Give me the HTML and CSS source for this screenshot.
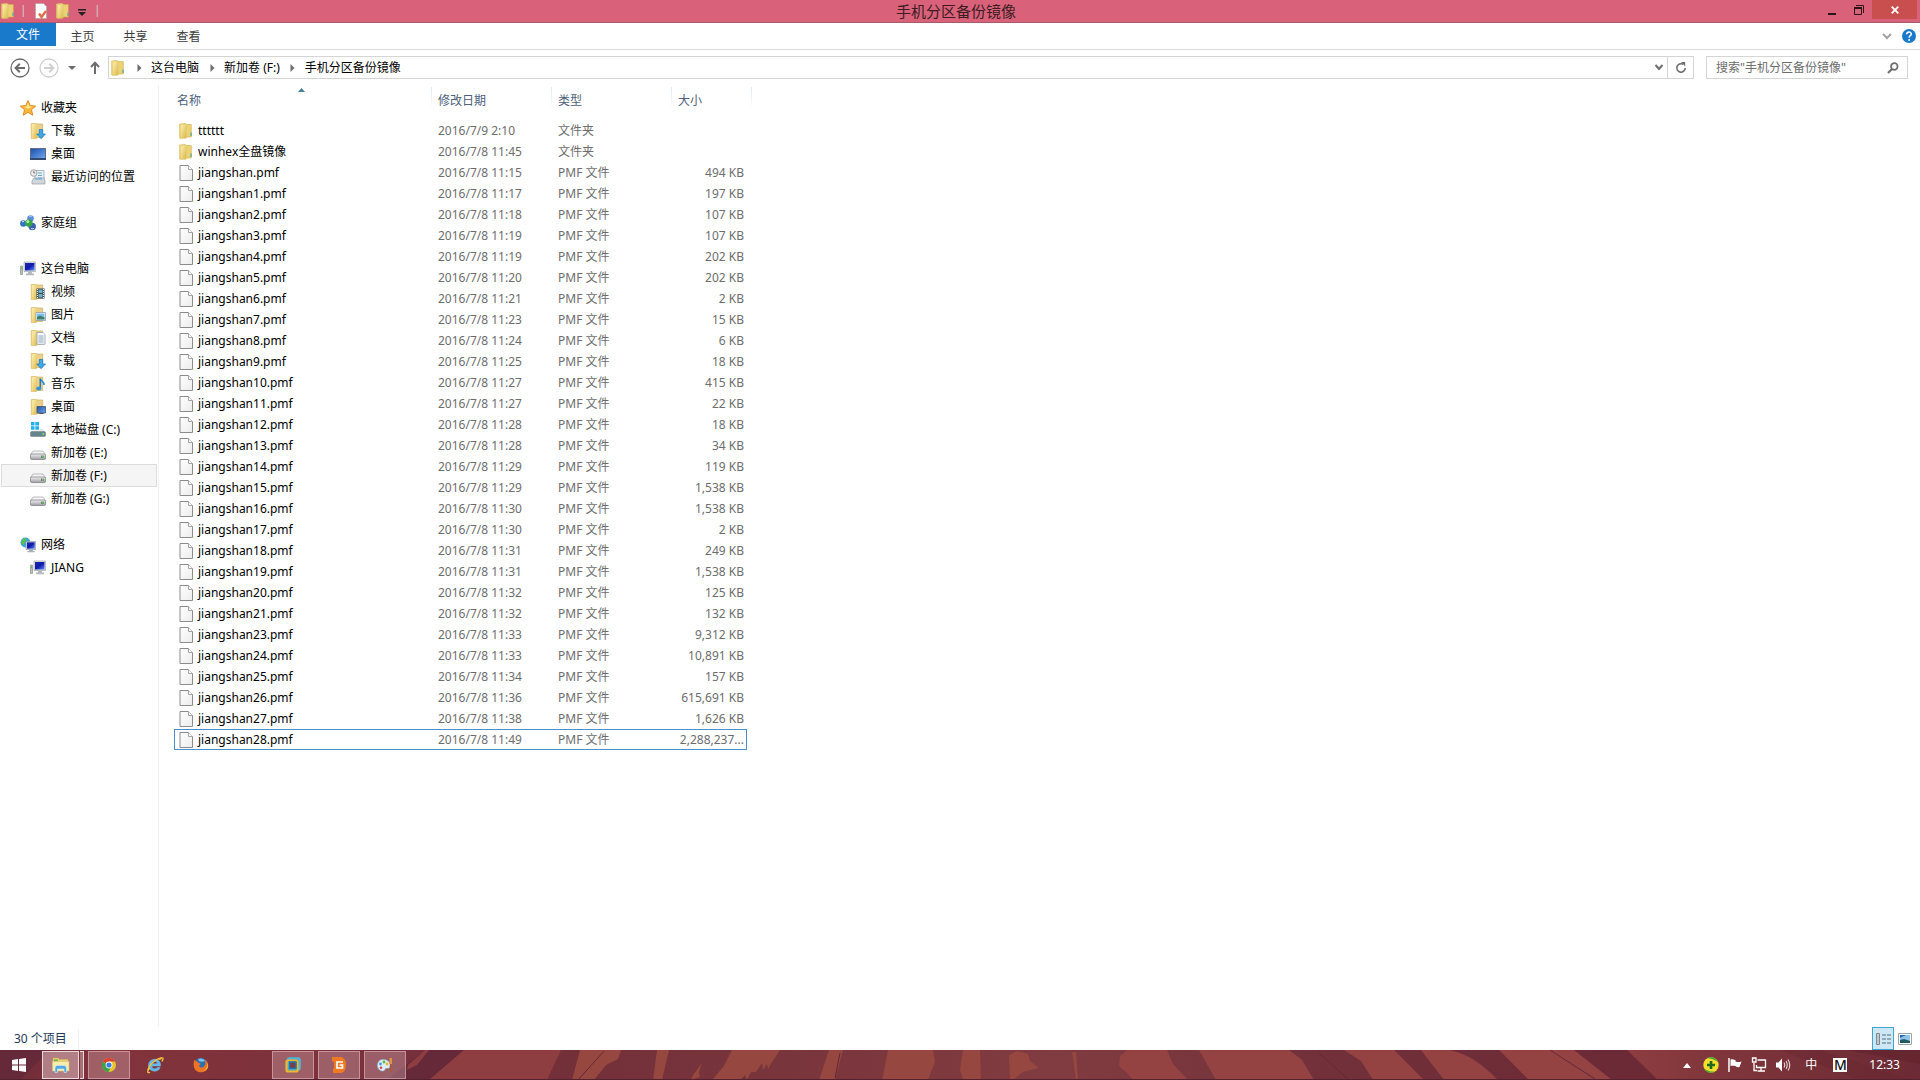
FILE: index.html
```html
<!DOCTYPE html>
<html lang="zh-CN">
<head>
<meta charset="utf-8">
<title>手机分区备份镜像</title>
<meta name="viewport" content="width=device-width, initial-scale=1">
<link rel="stylesheet" href="styles.css">
</head>
<body>
<svg class="defs" aria-hidden="true">
  <defs>
    <linearGradient id="gold" x1="0" y1="0" x2="1" y2="1"><stop offset="0" stop-color="#fdf3b4"/><stop offset="1" stop-color="#dcb84c"/></linearGradient>
    <linearGradient id="page" x1="0" y1="0" x2="1" y2="1"><stop offset="0" stop-color="#ffffff"/><stop offset="1" stop-color="#ececec"/></linearGradient>
    <linearGradient id="screen" x1="0" y1="0" x2="1" y2="1"><stop offset="0" stop-color="#1a2c9c"/><stop offset=".5" stop-color="#1018b0"/><stop offset="1" stop-color="#5c8cf0"/></linearGradient>
    <linearGradient id="desk" x1="0" y1="0" x2="1" y2="1"><stop offset="0" stop-color="#1b4fa8"/><stop offset="1" stop-color="#6fa8f0"/></linearGradient>
    <linearGradient id="metal" x1="0" y1="0" x2="0" y2="1"><stop offset="0" stop-color="#f2f2f4"/><stop offset="1" stop-color="#9c9ca4"/></linearGradient>
    <symbol id="folder" viewBox="0 0 16 16"><path d="M1.500 1l5.500-.7V14l-5.500 1z" fill="#f5e08a" stroke="#d9bd60" stroke-width=".6"/><path d="M7 1.500h6.300V14H6z" fill="#ecd274" stroke="#cfae4c" stroke-width=".6"/><path d="M2.500 2l5.600-1.200v14.400L2.500 15.500z" fill="url(#gold)" stroke="#dcc062" stroke-width=".5"/><path d="M12.400 9.500h1.300V13h-1.300z" fill="#5aa7a0"/></symbol>
    <symbol id="lib" viewBox="0 0 16 16"><path d="M1.200.5h5.300v15H1.200z" fill="#f3dd92" stroke="#cfae5a" stroke-width=".6"/><path d="M6.500 1h6.200v13.500H6z" fill="#ead08a" stroke="#c9a858" stroke-width=".6"/><path d="M2.200 1.500L7 .6v14.400l-4.800.7z" fill="url(#gold)"/></symbol>
    <symbol id="file" viewBox="0 0 16 16"><path d="M2 .5h8.500L14.500 4.500v11H2z" fill="url(#page)" stroke="#8c8c8c"/><path d="M10.500.5v4h4" fill="#fff" stroke="#a4a4a4"/></symbol>
    <symbol id="star" viewBox="0 0 16 16"><path d="M8 .5l2.200 5 5.500.6-4.200 3.600 1.300 5.600L8 12.400 3.200 15.300l1.300-5.600L.3 6.100l5.500-.6z" fill="#f9b93c" stroke="#dd8320" stroke-width=".9"/><path d="M8 3l1.500 3.400 3 .4L8 8.500 4 6.800l2.700-.4z" fill="#ffe89a"/></symbol>
    <symbol id="down" viewBox="0 0 16 16"><use href="#lib"/><path d="M9.300 6.500h3.400V11H15.500L11 15.700 6.700 11h2.600z" fill="#3fa9e8" stroke="#1b76b8" stroke-width=".7"/></symbol>
    <symbol id="desktop" viewBox="0 0 16 16"><path d="M.5 2.500h15v10H.5z" fill="url(#desk)" stroke="#5c6c88"/><path d="M0 12h16v2H0z" fill="#33496e"/></symbol>
    <symbol id="recent" viewBox="0 0 16 16"><path d="M5 1.500h9v10H5z" fill="#eaf4fb" stroke="#98a6b2" stroke-width=".8"/><path d="M8 4h4M8 6.500h4M8 9h4" stroke="#69a5d0"/><path d="M2 12l2-3h10l1 3v3H2z" fill="#d2d6da" stroke="#9a9fa5" stroke-width=".7"/><path d="M5 10h7" stroke="#57a4d5"/><circle cx="3.800" cy="4" r="3.300" fill="#eee" stroke="#999" stroke-width=".9"/><path d="M3.800 2v2h1.500" fill="none" stroke="#555" stroke-width=".8"/></symbol>
    <symbol id="home" viewBox="0 0 16 16"><circle cx="10.500" cy="3.500" r="3.300" fill="#5b8de0"/><circle cx="3.300" cy="8.500" r="3.200" fill="#3273c8"/><circle cx="12.200" cy="11.500" r="3.700" fill="#3a5fb4"/><circle cx="8.800" cy="8" r="3.800" fill="#38a544"/><circle cx="7.800" cy="6.600" r="1.600" fill="#b8e8a8"/><path d="M9.500 1.500a2 2 0 0 1 2 0M2 7a2 2 0 0 1 2-.5M11 13.500a3 3 0 0 0 3 0" stroke="#d8e8ff" fill="none"/></symbol>
    <symbol id="pc" viewBox="0 0 16 16"><path d="M.5 5h2v8.500h-2z" fill="#b8c0b8" stroke="#8a948a" stroke-width=".7"/><path d="M1 6.500h1v1.500H1z" fill="#45c445"/><path d="M4 1h11.500v9.500H4z" fill="#dfe2e6" stroke="#a3a8ae" stroke-width=".7"/><path d="M5 2h9.500v7.500H5z" fill="url(#screen)"/><path d="M8 10.500h4v2h2v1.800H6v-1.800h2z" fill="#b5b9be"/></symbol>
    <symbol id="video" viewBox="0 0 16 16"><use href="#lib"/><path d="M6.500 4.500h8v10h-8z" fill="#39444c"/><path d="M8.500 5.500h4V9h-4zm0 4.500h4v3.500h-4z" fill="#6fb0c4"/><path d="M7.500 5v9.500M13.500 5v9.500" stroke="#eee" stroke-dasharray="1 1"/></symbol>
    <symbol id="picture" viewBox="0 0 16 16"><use href="#lib"/><path d="M6 5.500h9.500v8H6z" fill="#fff" stroke="#8c9aa8" stroke-width=".8"/><path d="M7 6.500h7.500v6H7z" fill="#79bfe8"/><path d="M7 12.500V10l3-1.500 4.500 2v2z" fill="#3c8067"/></symbol>
    <symbol id="docs" viewBox="0 0 16 16"><use href="#lib"/><path d="M7 2.500h6l2 2v9.800H7z" fill="#f8fafc" stroke="#96a0aa" stroke-width=".8"/><path d="M8.500 6h5M8.500 8h5M8.500 10h5M8.500 12h5" stroke="#7c9cc0" stroke-width=".9"/></symbol>
    <symbol id="music" viewBox="0 0 16 16"><use href="#lib"/><path d="M10 2.500c1 2.500 4.500 3 4 6.500" fill="none" stroke="#2c8fd0" stroke-width="1.600"/><path d="M10.300 3v9" stroke="#2378b8" stroke-width="1.500"/><ellipse cx="8.800" cy="12.500" rx="2.500" ry="1.900" fill="#2f96da"/></symbol>
    <symbol id="deskfolder" viewBox="0 0 16 16"><use href="#lib"/><path d="M7 7.500h8.500V14H7z" fill="url(#desk)" stroke="#43546c" stroke-width=".8"/><path d="M9.500 14.500h4" stroke="#555"/></symbol>
    <symbol id="drive" viewBox="0 0 16 16"><path d="M3 6h10l2.700 4H.3z" fill="#f5f5f6" stroke="#a4a4aa" stroke-width=".7"/><rect x=".4" y="9" width="15.200" height="5.500" rx="1.500" fill="url(#metal)" stroke="#85858c" stroke-width=".8"/><path d="M11 10.500h1.500v2.500H11z" fill="#777"/><path d="M13 10.500h1.200v2.500H13z" fill="#45c030"/></symbol>
    <symbol id="windrive" viewBox="0 0 16 16"><path d="M1 0h3.500v3.500H1zM5.300 0H9v3.500H5.300zM1 4.300h3.500v3.500H1zM5.300 4.300H9v3.500H5.300z" fill="#22b1ee"/><path d="M10 7h3l2.500 3H1l1.500-1.500H10z" fill="#e2e8ea"/><rect x=".4" y="9.500" width="15.200" height="5" rx="1.500" fill="#62868c" stroke="#8a9296" stroke-width=".8"/><path d="M12.500 11h1.500v2h-1.500z" fill="#6ee050"/></symbol>
    <symbol id="net" viewBox="0 0 16 16"><circle cx="5.500" cy="5.500" r="5" fill="#38a6d8"/><path d="M2 3c2-2 4-2 5-1L5 5 3 8 1 6zM7 5l3-1v4L7 9z" fill="#5cc050"/><path d="M6 4.500h9.500v8H6z" fill="#dfe2e6" stroke="#8f98a4" stroke-width=".7"/><path d="M7 5.300h7.700v6.400H7z" fill="url(#screen)"/><path d="M9 12.500h4V14h1.500v1.300h-7V14H9z" fill="#a8b0ba"/></symbol>
    <symbol id="sep" viewBox="0 0 6 8"><path d="M1.500 0l4 4-4 4z" fill="#6d6d6d"/></symbol>
  </defs>
</svg>

<header class="titlebar">
  <div class="quick">
    <svg class="q-folder" viewBox="0 0 16 16"><use href="#folder"/></svg>
    <span class="bar"></span>
    <button class="q-btn" aria-label="属性"><svg width="16" height="16" viewBox="0 0 16 16"><path d="M2.500.5h8l3 3v12h-11z" fill="#fff" stroke="#b9a6ac" stroke-width=".8"/><path d="M6 10.500l2.500 3.500L13 8" fill="none" stroke="#e0704a" stroke-width="2.500"/></svg></button>
    <button class="q-btn" aria-label="新建文件夹"><svg width="16" height="16"><use href="#folder"/></svg></button>
    <button class="q-caret" aria-label="自定义"><svg width="8" height="7" viewBox="0 0 8 7"><path d="M0 0h8v1.500H0zM0 3h8L4 7z" fill="#222"/></svg></button>
    <span class="bar"></span>
  </div>
  <h1 class="title">手机分区备份镜像</h1>
  <div class="winbtns">
    <button class="w-btn" aria-label="最小化"><svg width="10" height="12" viewBox="0 0 10 12"><path d="M1 9h8v2H1z" fill="#2b1519"/></svg></button>
    <button class="w-btn" aria-label="还原"><svg width="10" height="10" viewBox="0 0 10 10"><path d="M2 .5h7.500V8M.5 3v6.500h7V3M0 3h8" fill="none" stroke="#2b1519"/><path d="M0 2h8v2H0z" fill="#2b1519"/></svg></button>
    <button class="w-btn w-close" aria-label="关闭"><svg width="8" height="8" viewBox="0 0 8 8"><path d="M.7.7l6.600 6.600M7.300.7L.7 7.300" stroke="#fff" stroke-width="1.800"/></svg></button>
  </div>
</header>

<nav class="ribbon" aria-label="功能区">
  <button class="tab tab-file">文件</button>
  <button class="tab">主页</button>
  <button class="tab">共享</button>
  <button class="tab">查看</button>
  <button class="r-icon push" aria-label="展开功能区"><svg width="10" height="7" viewBox="0 0 10 7"><path d="M1 1l4 4 4-4" fill="none" stroke="#a2a2a2" stroke-width="2"/></svg></button>
  <button class="r-icon" aria-label="帮助"><svg width="14" height="14" viewBox="0 0 14 14"><circle cx="7" cy="7" r="7" fill="#1979ca"/><path d="M4.700 5.300c0-3 4.600-3 4.600-.3 0 1.700-2.200 1.700-2.200 3.700" fill="none" stroke="#fff" stroke-width="1.500"/><circle cx="7.100" cy="10.900" r="1" fill="#fff"/></svg></button>
</nav>

<div class="addressbar">
  <button class="a-btn" aria-label="后退"><svg width="20" height="20" viewBox="0 0 20 20"><circle cx="10" cy="10" r="9" fill="none" stroke="#6a6a6a" stroke-width="1.300"/><path d="M15 10H6M9.800 5.800L5.600 10l4.200 4.200" fill="none" stroke="#6a6a6a" stroke-width="2"/></svg></button>
  <button class="a-btn" aria-label="前进"><svg width="20" height="20" viewBox="0 0 20 20"><circle cx="10" cy="10" r="9" fill="none" stroke="#cfcfcf" stroke-width="1.300"/><path d="M5 10h9M10.200 5.800l4.200 4.200-4.200 4.200" fill="none" stroke="#cfcfcf" stroke-width="2"/></svg></button>
  <button class="a-caret" aria-label="最近浏览的位置"><svg width="8" height="4" viewBox="0 0 8 4"><path d="M0 0h8L4 4z" fill="#6d6d6d"/></svg></button>
  <button class="a-up" aria-label="上移"><svg width="10" height="13" viewBox="0 0 10 13"><path d="M5 13V2M1 6l4-4.300L9 6" fill="none" stroke="#6d6d6d" stroke-width="2"/></svg></button>
  <div class="crumbs">
    <svg class="c-folder" viewBox="0 0 16 16"><use href="#folder"/></svg>
    <span class="c-sep"><svg width="6" height="8"><use href="#sep"/></svg></span><a href="#pc-root">这台电脑</a>
    <span class="c-sep"><svg width="6" height="8"><use href="#sep"/></svg></span><a href="#vol-f">新加卷 (F:)</a>
    <span class="c-sep"><svg width="6" height="8"><use href="#sep"/></svg></span><a href="#files">手机分区备份镜像</a>
    <button class="c-drop" aria-label="以前的位置"><svg width="8" height="7" viewBox="0 0 8 7"><path d="M.5 1L4 5l3.500-4" fill="none" stroke="#6d6d6d" stroke-width="2"/></svg></button>
    <button class="c-refresh" aria-label="刷新"><svg width="12" height="12" viewBox="0 0 12 12"><path d="M8 2.300A4.200 4.200 0 1 0 10.200 6" fill="none" stroke="#6d6d6d" stroke-width="1.600"/><path d="M6 0h4.200v4.500z" fill="#6d6d6d"/></svg></button>
  </div>
  <div class="search">
    <input type="search" aria-label="搜索" placeholder='搜索"手机分区备份镜像"'>
    <svg width="12" height="12" viewBox="0 0 12 12"><circle cx="7.300" cy="4.500" r="3.300" fill="none" stroke="#6d6d6d" stroke-width="1.700"/><path d="M5 7L1 11" stroke="#6d6d6d" stroke-width="2.200"/></svg>
  </div>
</div>

<main class="main">
  <nav class="tree" aria-label="导航窗格">
    <ul class="group">
      <li><a class="root" href="#fav"><svg><use href="#star"/></svg>收藏夹</a></li>
      <li><a href="#fav-down"><svg><use href="#down"/></svg>下载</a></li>
      <li><a href="#fav-desk"><svg><use href="#desktop"/></svg>桌面</a></li>
      <li><a href="#fav-recent"><svg><use href="#recent"/></svg>最近访问的位置</a></li>
    </ul>
    <ul class="group">
      <li><a class="root" href="#home-group"><svg><use href="#home"/></svg>家庭组</a></li>
    </ul>
    <ul class="group">
      <li><a class="root" href="#pc-root"><svg><use href="#pc"/></svg>这台电脑</a></li>
      <li><a href="#pc-video"><svg><use href="#video"/></svg>视频</a></li>
      <li><a href="#pc-pic"><svg><use href="#picture"/></svg>图片</a></li>
      <li><a href="#pc-docs"><svg><use href="#docs"/></svg>文档</a></li>
      <li><a href="#pc-down"><svg><use href="#down"/></svg>下载</a></li>
      <li><a href="#pc-music"><svg><use href="#music"/></svg>音乐</a></li>
      <li><a href="#pc-desk"><svg><use href="#deskfolder"/></svg>桌面</a></li>
      <li><a href="#vol-c"><svg><use href="#windrive"/></svg>本地磁盘 (C:)</a></li>
      <li><a href="#vol-e"><svg><use href="#drive"/></svg>新加卷 (E:)</a></li>
      <li><a class="current" href="#vol-f"><svg><use href="#drive"/></svg>新加卷 (F:)</a></li>
      <li><a href="#vol-g"><svg><use href="#drive"/></svg>新加卷 (G:)</a></li>
    </ul>
    <ul class="group">
      <li><a class="root" href="#network"><svg><use href="#net"/></svg>网络</a></li>
      <li><a href="#jiang"><svg><use href="#pc"/></svg>JIANG</a></li>
    </ul>
  </nav>

  <section class="content" id="files">
    <table class="files">
      <colgroup><col class="col-name"><col class="col-mid"><col class="col-mid"><col class="col-size"><col class="col-end"></colgroup>
      <thead>
        <tr><th scope="col" class="sorted" aria-sort="ascending">名称<svg class="sort" width="7" height="4" viewBox="0 0 7 4"><path d="M0 4l3.500-4L7 4z" fill="#4a8098"/></svg></th><th scope="col">修改日期</th><th scope="col">类型</th><th scope="col">大小</th><td class="end"></td></tr>
      </thead>
      <tbody>
        <tr><td><svg><use href="#folder"/></svg>tttttt</td><td>2016/7/9 2:10</td><td>文件夹</td><td></td></tr>
        <tr><td><svg><use href="#folder"/></svg>winhex全盘镜像</td><td>2016/7/8 11:45</td><td>文件夹</td><td></td></tr>
        <tr><td><svg><use href="#file"/></svg>jiangshan.pmf</td><td>2016/7/8 11:15</td><td>PMF 文件</td><td>494 KB</td></tr>
        <tr><td><svg><use href="#file"/></svg>jiangshan1.pmf</td><td>2016/7/8 11:17</td><td>PMF 文件</td><td>197 KB</td></tr>
        <tr><td><svg><use href="#file"/></svg>jiangshan2.pmf</td><td>2016/7/8 11:18</td><td>PMF 文件</td><td>107 KB</td></tr>
        <tr><td><svg><use href="#file"/></svg>jiangshan3.pmf</td><td>2016/7/8 11:19</td><td>PMF 文件</td><td>107 KB</td></tr>
        <tr><td><svg><use href="#file"/></svg>jiangshan4.pmf</td><td>2016/7/8 11:19</td><td>PMF 文件</td><td>202 KB</td></tr>
        <tr><td><svg><use href="#file"/></svg>jiangshan5.pmf</td><td>2016/7/8 11:20</td><td>PMF 文件</td><td>202 KB</td></tr>
        <tr><td><svg><use href="#file"/></svg>jiangshan6.pmf</td><td>2016/7/8 11:21</td><td>PMF 文件</td><td>2 KB</td></tr>
        <tr><td><svg><use href="#file"/></svg>jiangshan7.pmf</td><td>2016/7/8 11:23</td><td>PMF 文件</td><td>15 KB</td></tr>
        <tr><td><svg><use href="#file"/></svg>jiangshan8.pmf</td><td>2016/7/8 11:24</td><td>PMF 文件</td><td>6 KB</td></tr>
        <tr><td><svg><use href="#file"/></svg>jiangshan9.pmf</td><td>2016/7/8 11:25</td><td>PMF 文件</td><td>18 KB</td></tr>
        <tr><td><svg><use href="#file"/></svg>jiangshan10.pmf</td><td>2016/7/8 11:27</td><td>PMF 文件</td><td>415 KB</td></tr>
        <tr><td><svg><use href="#file"/></svg>jiangshan11.pmf</td><td>2016/7/8 11:27</td><td>PMF 文件</td><td>22 KB</td></tr>
        <tr><td><svg><use href="#file"/></svg>jiangshan12.pmf</td><td>2016/7/8 11:28</td><td>PMF 文件</td><td>18 KB</td></tr>
        <tr><td><svg><use href="#file"/></svg>jiangshan13.pmf</td><td>2016/7/8 11:28</td><td>PMF 文件</td><td>34 KB</td></tr>
        <tr><td><svg><use href="#file"/></svg>jiangshan14.pmf</td><td>2016/7/8 11:29</td><td>PMF 文件</td><td>119 KB</td></tr>
        <tr><td><svg><use href="#file"/></svg>jiangshan15.pmf</td><td>2016/7/8 11:29</td><td>PMF 文件</td><td>1,538 KB</td></tr>
        <tr><td><svg><use href="#file"/></svg>jiangshan16.pmf</td><td>2016/7/8 11:30</td><td>PMF 文件</td><td>1,538 KB</td></tr>
        <tr><td><svg><use href="#file"/></svg>jiangshan17.pmf</td><td>2016/7/8 11:30</td><td>PMF 文件</td><td>2 KB</td></tr>
        <tr><td><svg><use href="#file"/></svg>jiangshan18.pmf</td><td>2016/7/8 11:31</td><td>PMF 文件</td><td>249 KB</td></tr>
        <tr><td><svg><use href="#file"/></svg>jiangshan19.pmf</td><td>2016/7/8 11:31</td><td>PMF 文件</td><td>1,538 KB</td></tr>
        <tr><td><svg><use href="#file"/></svg>jiangshan20.pmf</td><td>2016/7/8 11:32</td><td>PMF 文件</td><td>125 KB</td></tr>
        <tr><td><svg><use href="#file"/></svg>jiangshan21.pmf</td><td>2016/7/8 11:32</td><td>PMF 文件</td><td>132 KB</td></tr>
        <tr><td><svg><use href="#file"/></svg>jiangshan23.pmf</td><td>2016/7/8 11:33</td><td>PMF 文件</td><td>9,312 KB</td></tr>
        <tr><td><svg><use href="#file"/></svg>jiangshan24.pmf</td><td>2016/7/8 11:33</td><td>PMF 文件</td><td>10,891 KB</td></tr>
        <tr><td><svg><use href="#file"/></svg>jiangshan25.pmf</td><td>2016/7/8 11:34</td><td>PMF 文件</td><td>157 KB</td></tr>
        <tr><td><svg><use href="#file"/></svg>jiangshan26.pmf</td><td>2016/7/8 11:36</td><td>PMF 文件</td><td>615,691 KB</td></tr>
        <tr><td><svg><use href="#file"/></svg>jiangshan27.pmf</td><td>2016/7/8 11:38</td><td>PMF 文件</td><td>1,626 KB</td></tr>
        <tr class="focused"><td><svg><use href="#file"/></svg>jiangshan28.pmf</td><td>2016/7/8 11:49</td><td>PMF 文件</td><td>2,288,237...</td></tr>
      </tbody>
    </table>
  </section>
</main>

<div class="statusbar">
  <span class="count">30 个项目</span>
  <button class="view view-on" aria-label="详细信息"><svg width="16" height="14" viewBox="0 0 16 14"><path d="M1.500 1.500h3v11h-3zM1 5h4M1 9h4" fill="#fff" stroke="#7a8894"/><path d="M2.500 3h1M2.500 7h1M2.500 11h1" stroke="#333"/><path d="M7 3h4M12 3h4M7 7h4M12 7h4M7 11h4M12 11h4" stroke="#5a6a76"/></svg></button>
  <button class="view" aria-label="大图标"><svg width="14" height="12" viewBox="0 0 14 12"><path d="M.5.5h13v11H.5z" fill="#fff" stroke="#9ba3ab"/><path d="M2 2h10v8H2z" fill="#8fc3ea"/><path d="M2 10V7l4-1 6 2v2z" fill="#1f5b60"/><path d="M2 2h6l-6 3z" fill="#2b66b0"/></svg></button>
</div>

<footer class="taskbar">
  <svg class="wallpaper" viewBox="0 0 1920 30" preserveAspectRatio="none" aria-hidden="true">
    <defs>
      <linearGradient id="base" x1="0" x2="1"><stop offset="0" stop-color="#6e2c38"/><stop offset=".06" stop-color="#82333b"/><stop offset=".16" stop-color="#7d323b"/><stop offset=".2" stop-color="#77303c"/><stop offset=".3" stop-color="#743039"/><stop offset=".55" stop-color="#803c40"/><stop offset=".7" stop-color="#71303a"/><stop offset=".84" stop-color="#6c2a36"/><stop offset="1" stop-color="#66262f"/></linearGradient>
      <linearGradient id="fade" x1="0" x2="1"><stop offset="0" stop-color="#8e3d40"/><stop offset=".3" stop-color="#80363b"/><stop offset="1" stop-color="#6b2a35"/></linearGradient>
    </defs>
    <path fill="url(#base)" d="M0 0h1920v30H0z"/>
    <path fill="#65293a" d="M0 0h50L20 30H0zM425 0h39L429 30h-42z"/>
    <path fill="#8e3e41" d="M408 15L425 0h4l-12 15-10 5zM464 0h97l-14 30H429z"/>
    <path fill="#96473f" d="M580 0h41l-3 9-12 6-12 15h-22zM657 0h12l-7 30h-9zM732 0h48l-8 12-4 7-1-5-4 6-1-7-6 9-5 0-4 8-2-5-5 5h-28l12-14zM702 13l-3 9 1 5-9 3 2-5zM829 0h14l-8 30h-16zM888 0h45l2 12-7 18h-46l3-14zM963 0h17l1 30h-18l-3-10zM1009 5l8-4 11 3 2 7 9 7-16 4-10 8h-3zM1072 2h4l2 28h-2z"/>
    <path fill="#954342" d="M1127 0h40l6 14 15 16h-55l-6-7-8-7 1-10zM1199 0h90l13 10 12 20h-98zM1344 0h50l30 30h-51l-12-19zM1421 0h28c20 4 33 14 49 30h-54zM1499 0h75l38 30h-83z"/>
    <path fill="none" stroke="#652936" d="M1550 0l45 29M604 1l-26 29M840 3l-5 25M1319 3l30 27"/>
    <path fill="url(#fade)" d="M1627 0h220l73 14v16h-262z"/>
    <path fill="#63262f" opacity=".3" d="M1780 0h40l90 30h-50z"/>
    <path fill="#54222e" d="M0 29h1920v1H0z"/>
  </svg>
  <button class="task task-start" aria-label="开始"><svg width="14" height="14" viewBox="0 0 14 14"><path d="M0 2l6-1v5.500H0zM7 .9L14 0v6.500H7zM0 7.500h6V13l-6-1zM7 7.500h7V14l-7-1z" fill="#fff"/></svg></button>
  <span class="stack">
    <button class="task open active" aria-label="文件资源管理器"><svg width="18" height="16" viewBox="0 0 18 16"><path d="M1 1h5l1.500 1.500H16v8H1z" fill="#e9d27a" stroke="#cfae55" stroke-width=".6"/><path d="M2 2.500h4V4H2z" fill="#68b04a"/><path d="M.5 4.500h16.500V14H.5z" fill="#f7ecac" stroke="#d9c06a" stroke-width=".6"/><path d="M3 15.500V11q0-2.500 2.500-2.500h6.500Q14.500 8.500 14.500 11v4.500H12V12H5.500v3.500z" fill="#4fa9e0" stroke="#d4ecfa" stroke-width=".6"/></svg></button>
    <span class="stack-edge"></span>
  </span>
  <button class="task open" aria-label="Chrome"><svg width="16" height="16" viewBox="0 0 16 16"><circle cx="8" cy="8" r="7" fill="#e8c52c"/><path d="M8 8L1.900 4.500A7 7 0 0 1 14.100 4.500H8z" fill="#d9402f"/><path d="M1.900 4.500A7 7 0 0 0 7.500 15L10 10z" fill="#3aa14a"/><circle cx="8" cy="8" r="3.400" fill="#fff"/><circle cx="8" cy="8" r="2.600" fill="#3e7de0"/></svg></button>
  <button class="task" aria-label="Internet Explorer"><svg width="18" height="18" viewBox="0 0 18 18"><path d="M14.500 10H5.700c.2 3.300 4.300 3.600 5.500 1.400h3C12.500 17 2.500 16.500 2.500 9.300c0-8 13-8.200 12 .7zM5.800 7.700h5.600c-.3-3-5-3-5.600 0z" fill="#5cb8ee" stroke="#8bd0fa" stroke-width=".4"/><path d="M3.800 12C1 15 1 17.500 4 16.300M13.500 3.500C17 .5 18 2 15.800 5.500M1.800 14C3 9 9 3 15.500 1.700" fill="none" stroke="#f0c13c" stroke-width="1.400"/></svg></button>
  <button class="task" aria-label="Firefox"><svg width="16" height="16" viewBox="0 0 16 16"><circle cx="8" cy="8" r="7" fill="#2b6fb5"/><path d="M5 2c3-1.500 6 0 7 2-2 1-4 1-6 0z" fill="#79c3ec"/><path d="M1.200 3C2.500 4 4 4 5 5.500L8 7 6 8.500c1 3 5 2.500 6-.5 1-2 0-4-1-5.500 3 1.500 4.800 4 4 7.500C13.500 17 2.500 17 1 10c-.5-2-.5-5 .2-7z" fill="#ee7424"/><path d="M14.300 5c1 3-.5 8.500-5.300 9 5 .5 7.500-4.500 5.300-9z" fill="#f9c440"/></svg></button>
  <span class="task-space"></span>
  <button class="task open" aria-label="VMware"><svg width="16" height="16" viewBox="0 0 16 16"><rect x="3" y="1.500" width="11.500" height="11" rx="1.500" fill="none" stroke="#4ab8dc" stroke-width="2.600"/><rect x="1.500" y="3.500" width="11" height="11" rx="1.500" fill="none" stroke="#f2b52e" stroke-width="2.200"/><rect x="4.500" y="5" width="6.500" height="6.500" fill="#7b3d4a" stroke="#1d7ca8" stroke-width="1.500"/></svg></button>
  <button class="task open" aria-label="DiskGenius"><svg width="16" height="16" viewBox="0 0 16 16"><path d="M1 0h9q5 1 5 8t-5 8H2V12l1-1V5L1 4z" fill="#ef7a22"/><path d="M12 5H6v6h5.500V8H8.500" fill="none" stroke="#fff" stroke-width="1.700"/></svg></button>
  <button class="task open" aria-label="画图"><svg width="18" height="16" viewBox="0 0 18 16"><path d="M8 2.500C2 2 .5 7.500 2 11s6 4 7 1.500 3.500 0 4.500-2C15 7 13 2.800 8 2.500z" fill="#dfeef6" stroke="#8fb0c4" stroke-width=".6"/><circle cx="4.500" cy="7" r="1.400" fill="#3a9ae0"/><circle cx="8" cy="5" r="1.400" fill="#58b848"/><circle cx="11" cy="7" r="1.400" fill="#e8b62c"/><circle cx="5" cy="10.700" r="1.300" fill="#d0483c"/><path d="M13.500 1h2.500v6h-2.500z" fill="#e09340"/><path d="M14 7h1.500v8H14z" fill="#a85a2c"/></svg></button>
  <div class="tray">
    <button class="tr" aria-label="显示隐藏的图标"><svg width="8" height="5" viewBox="0 0 8 5"><path d="M0 5l4-5 4 5z" fill="#fff"/></svg></button>
    <button class="tr" aria-label="安全卫士"><svg width="16" height="16" viewBox="0 0 16 16"><circle cx="8" cy="8" r="7.700" fill="#f3df2c"/><path d="M4 1.300C8-1 13 1 15 5c-4-3-8-3.500-11-3.700zM1 11c3 3 7 4 11 3.500-4 2.500-9 1-11-3.500z" fill="#3fa535"/><path d="M8 4v8M4 8h8" stroke="#1c6b1c" stroke-width="2.600"/></svg></button>
    <button class="tr" aria-label="操作中心"><svg width="16" height="16" viewBox="0 0 16 16"><path d="M2 1v14" stroke="#fff" stroke-width="1.500"/><path d="M3.500 2.500c3-1 4 .5 5 .5v1.500c2 1 4 .5 6 0L12.500 10c-2 .5-3.500 0-4-1-2-.5-3-.5-5 0z" fill="#fff"/></svg></button>
    <button class="tr" aria-label="网络"><svg width="16" height="16" viewBox="0 0 16 16"><path d="M6.500 3H14.500v7.500h-9V8M10 10.500V14M6.500 14H14M3 6v7.500h3M1.500 1h3.500v4H1.500z" fill="none" stroke="#fff" stroke-width="1.300"/></svg></button>
    <button class="tr" aria-label="音量"><svg width="16" height="16" viewBox="0 0 16 16"><path d="M1 5.500h2.500L7 1.500v13L3.500 10.500H1z" fill="#fff"/><path d="M9 5.500q1.500 2.500 0 5M11 4q2.500 4 0 8M13 2.500q3.500 5.500 0 11" fill="none" stroke="#e6d4d6" stroke-width="1.100"/></svg></button>
    <button class="tr tr-lang">中</button>
    <button class="tr tr-ime" aria-label="输入法"><span class="ime">M</span></button>
    <time class="clock">12:33</time>
  </div>
</footer>
</body>
</html>
```
FILE: styles.css
```css
* { box-sizing: border-box; }

body {
  margin: 0;
  min-height: 100vh;
  display: flex;
  flex-direction: column;
  background: #fff;
  color: #000;
  font: 12px/20px "Noto Sans", "Noto Sans CJK SC", sans-serif;
}

button {
  display: flex;
  align-items: center;
  justify-content: center;
  padding: 0;
  border: 0;
  background: none;
  color: inherit;
  font: inherit;
}

a { color: inherit; text-decoration: none; }
svg { flex: none; }
.defs { position: absolute; width: 0; height: 0; }

/* Title bar */
.titlebar {
  display: grid;
  grid-template-columns: 1fr auto 1fr;
  height: 23px;
  background: #d9627a;
  border-bottom: 1px solid #a65a6a;
}
.quick { display: flex; align-items: center; }
.q-folder { width: 16px; height: 16px; }
.bar { width: 2px; height: 12px; margin: 0 6px; background: #c08a96; border-right: 1px solid #e8a0ae; }
.q-btn { width: 22px; }
.q-caret { width: 16px; padding-top: 3px; }
.title {
  margin: 0;
  padding-right: 8px;
  color: #3b1c22;
  font-size: 15px;
  font-weight: 400;
  line-height: 22px;
}
.winbtns { display: flex; justify-content: flex-end; padding-right: 3px; }
.w-btn { width: 27px; height: 19px; }
.w-close { width: 45px; background: #c94f4f; }

/* Ribbon tabs */
.ribbon {
  display: flex;
  align-items: center;
  height: 27px;
  border-bottom: 1px solid #dadbdc;
}
.tab { width: 53px; height: 26px; padding-top: 2px; color: #3c3c3c; }
.tab-file { width: 56px; height: 23px; padding-top: 0; align-self: flex-start; background: #1979ca; color: #fff; }
.push { margin-left: auto; }
.r-icon { width: 22px; height: 22px; }

/* Address bar */
.addressbar {
  display: flex;
  align-items: center;
  height: 35px;
  padding: 0 12px 0 5px;
}
.a-btn { width: 29px; }
.a-caret { width: 18px; }
.a-up { width: 27px; }
.crumbs {
  flex: 1;
  display: flex;
  align-items: center;
  height: 23px;
  margin-right: 12px;
  padding-left: 1px;
  border: 1px solid #d5d5d5;
}
.c-folder { width: 16px; height: 16px; }
.c-sep { display: flex; justify-content: center; width: 25px; }
.c-sep + a { margin-right: 0; }
.c-drop { width: 16px; margin-left: auto; }
.c-refresh { width: 26px; height: 21px; border-left: 1px solid #d5d5d5; }
.search {
  display: flex;
  align-items: center;
  width: 202px;
  height: 23px;
  padding: 0 8px 0 9px;
  border: 1px solid #d5d5d5;
}
.search input {
  flex: 1;
  min-width: 0;
  padding: 0;
  border: 0;
  outline: 0;
  background: none;
  font: inherit;
}
.search input::placeholder { color: #6d6d6d; opacity: 1; }

/* Navigation pane */
.main { flex: 1; display: flex; }
.tree {
  width: 159px;
  flex: none;
  padding: 11px 1px 0 1px;
  border-right: 1px solid #f0f3f5;
}
.group { margin: 0 0 23px; padding: 0; list-style: none; }
.tree a {
  display: flex;
  align-items: center;
  gap: 5px;
  height: 23px;
  padding-left: 28px;
  border: 1px solid transparent;
  white-space: nowrap;
}
.tree .root { padding-left: 18px; }
.tree svg { width: 16px; height: 16px; }
.tree .current { background: #f5f5f5; border-color: #dcdcdc; }

/* File list */
.content { flex: 1; min-width: 0; padding-left: 15px; }
.files { width: 578px; table-layout: fixed; border-collapse: collapse; }
.col-name { width: 257px; }
.col-mid { width: 120px; }
.col-size { width: 76px; }
.col-end { width: 5px; }
.files th {
  position: relative;
  height: 35px;
  padding: 0 0 4px 7px;
  background: linear-gradient(#dfe9ef, #fff) left 2px / 1px 22px no-repeat;
  color: #4c607a;
  font-weight: 400;
  text-align: left;
}
.files th.sorted { padding-left: 3px; background: none; }
.sort { position: absolute; left: 50%; top: 3px; margin-left: -5px; }
.files .end { background: linear-gradient(#dfe9ef, #fff) right 2px / 1px 22px no-repeat; }
.files td { height: 21px; padding: 0 0 0 7px; color: #6d6d6d; white-space: nowrap; }
.files tbody td:first-child { padding-left: 4px; color: #000; }
.files tbody td:nth-child(4) { padding: 0 3px 0 0; text-align: right; }
.files td svg { width: 16px; height: 16px; margin-right: 4px; vertical-align: middle; }
.focused td { box-shadow: inset 0 1px #4a90d0, inset 0 -1px #4a90d0; }
.focused td:first-child { box-shadow: inset 0 1px #4a90d0, inset 0 -1px #4a90d0, inset 1px 0 #4a90d0; }
.focused td:last-child { box-shadow: inset 0 1px #4a90d0, inset 0 -1px #4a90d0, inset -1px 0 #4a90d0; }

/* Status bar */
.statusbar { display: flex; align-items: center; height: 23px; padding: 0 4px 0 14px; }
.count { margin-right: auto; padding-right: 11px; border-right: 1px solid #f0f3f5; color: #1e395b; }
.view { width: 22px; height: 23px; }
.view-on { border: 1px solid #3fa5d0; background: #cde8f4; }

/* Taskbar */
.taskbar {
  position: relative;
  display: flex;
  align-items: center;
  gap: 4px;
  height: 30px;
}
.wallpaper { position: absolute; inset: 0; width: 100%; height: 100%; }
.task { position: relative; width: 42px; height: 28px; }
.task-start { width: 38px; }
.open { border: 1px solid rgba(235, 190, 195, .55); background: rgba(220, 180, 185, .35); }
.stack { position: relative; display: flex; gap: 1px; width: 42px; }
.active { width: 37px; border-color: #ecd9dc; background: rgba(235, 205, 210, .5); }
.stack-edge {
  width: 4px;
  height: 28px;
  border: 1px solid #ecd9dc;
  border-left: 0;
  background: rgba(235, 205, 210, .4);
}
.task-space { width: 42px; }
.tray {
  position: relative;
  display: flex;
  align-items: center;
  margin-left: auto;
  padding-right: 20px;
  color: #fff;
}
.tr { width: 24px; height: 28px; }
.tr-lang { width: 32px; }
.tr-ime { width: 26px; }
.ime {
  width: 14px;
  height: 14px;
  background: #fff;
  color: #111;
  font-size: 14px;
  font-weight: 500;
  line-height: 14px;
}
.clock { margin-left: 16px; }
```
